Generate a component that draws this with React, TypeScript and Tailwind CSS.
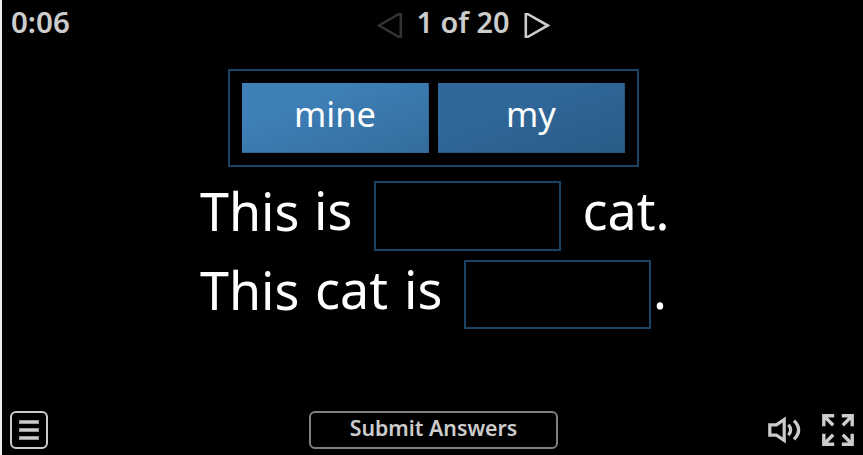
import type { ReactNode } from 'react';

const answers = [
  {
    label: 'mine',
    className: 'from-[#3d7fb7] from-30% to-[#346d9d] border-[#2f6593]'
  },
  {
    label: 'my',
    className: 'from-[#31689b] from-30% to-[#295c86] border-[#26547b]'
  }
];

function Word({ children, className }: { children: ReactNode; className: string }) {
  return <span className={`shrink-0 whitespace-pre ${className}`}>{children}</span>;
}

function Blank({ className }: { className: string }) {
  return <span className={`w-[187px] shrink-0 border-2 border-[#1b4366] ${className}`} />;
}

function Header() {
  return (
    <header className="flex h-[69px] items-start text-[29px] leading-[44px] font-semibold text-[#cccccc]">
      <span className="ml-[9px] w-[366px] text-[29.5px]">0:06</span>
      <button aria-label="Previous" className="mt-[12px]" type="button">
        <svg className="block" fill="none" height="28" viewBox="0 0 26 28" width="26">
          <path d="M2 13.5 21.5 2.2H23.8V24.8H21.5Z" stroke="#333333" strokeWidth="2.6" />
        </svg>
      </button>
      <span className="w-[120px] text-center text-[28.8px]">1 of 20</span>
      <button aria-label="Next" className="mt-[12px]" type="button">
        <svg className="block" fill="none" height="28" viewBox="0 0 28 28" width="28">
          <path d="M24.8 13.5 5 2.2H2.8V24.8H5Z" stroke="#cccccc" strokeWidth="2.6" />
        </svg>
      </button>
    </header>
  );
}

function Footer() {
  return (
    <footer className="flex h-[44px] items-start text-[#cccccc]">
      <button
        aria-label="Menu"
        className="ml-[8px] flex h-[38px] w-[38px] flex-col items-center justify-center gap-[4px] rounded-[6px] border-2 border-[#cccccc]"
        type="button"
      >
        <span className="h-[4px] w-[20px] border border-[#999999] bg-[#cccccc]" />
        <span className="h-[4px] w-[20px] border border-[#999999] bg-[#cccccc]" />
        <span className="h-[4px] w-[20px] border border-[#999999] bg-[#cccccc]" />
      </button>
      <button
        className="ml-[261px] h-[38px] w-[249px] rounded-[6px] border-2 border-[#808080] pb-[4px] text-[21.3px] leading-[30px] font-semibold"
        type="button"
      >
        Submit Answers
      </button>
      <button aria-label="Sound" className="mt-[3px] ml-[209px]" type="button">
        <svg className="block" fill="none" height="32" viewBox="0 0 36 32" width="36">
          <g stroke="currentColor" strokeWidth="3.2">
            <path d="M2.8 10.8H9.4L17.2 5.5V26.5L9.4 21.2H2.8Z" />
            <path d="M21.4 10.8Q25.9 16 21.4 21.2" />
            <path d="M27 6.7Q36.2 16 27 25.3" />
          </g>
        </svg>
      </button>
      <button aria-label="Full screen" className="mt-[2px] ml-[18px]" type="button">
        <svg className="block" fill="none" height="34" viewBox="0 0 34 34" width="34">
          <g stroke="currentColor" strokeWidth="3.4">
            <path d="M13.2 2.8H2.8V13.2M3 3 12.2 12.2" />
            <path d="M20.8 2.8H31.2V13.2M31 3 21.8 12.2" />
            <path d="M13.2 31.2H2.8V20.8M3 31 12.2 21.8" />
            <path d="M20.8 31.2H31.2V20.8M31 31 21.8 21.8" />
          </g>
        </svg>
      </button>
    </footer>
  );
}

export default function App() {
  return (
    <div className="flex h-[455px] w-[863px] flex-col overflow-hidden border-l-2 border-[#eeeeee] bg-black font-['Noto_Sans',sans-serif]">
      <Header />

      <main className="h-[342px] text-[52px] leading-[60px] text-white">
        <div className="ml-[226px] flex h-[98px] w-[411px] gap-[9px] border-2 border-[#1b4366] p-[12px]">
          {answers.map((answer) => (
            <button
              className={`h-[70px] w-[187px] border-r border-b bg-linear-to-br pb-[8px] text-[34.5px] leading-[60px] ${answer.className}`}
              key={answer.label}
              type="button"
            >
              {answer.label}
            </button>
          ))}
        </div>

        <p className="ml-[198px] flex h-[79px] pt-[14px] leading-[58px]">
          <Word className="w-[114px] pt-px">This</Word>
          <Word className="w-[60px]">is</Word>
          <Blank className="h-[70px]" />
          <Word className="ml-[21.5px]">cat.</Word>
        </p>
        <p className="ml-[198px] flex h-[79px] pt-[14px] leading-[58px]">
          <Word className="w-[115px] pt-px">This</Word>
          <Word className="w-[89px]">cat</Word>
          <Word className="w-[60px]">is</Word>
          <Blank className="h-[69px]" />
          <Word className="ml-[2px]">.</Word>
        </p>
      </main>

      <Footer />
    </div>
  );
}
